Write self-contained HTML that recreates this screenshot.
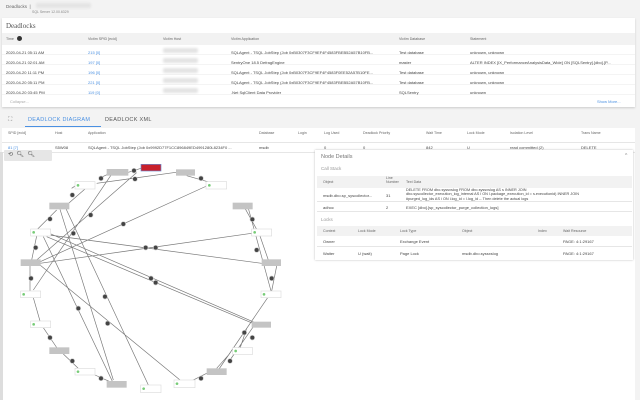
<!DOCTYPE html>
<html><head><meta charset="utf-8"><style>
*{margin:0;padding:0;box-sizing:border-box}
body{width:640px;height:400px;overflow:hidden;background:#f3f3f3;font-family:"Liberation Sans",sans-serif;color:#555;position:relative}
.a{position:absolute;white-space:nowrap}
.t{font-size:4px;color:#444}
.h{font-size:3.6px;color:#666}
.b{color:#4a90e2}
.blur{background:#e4e4e4;height:5px;border-radius:2px;filter:blur(1px)}
</style></head><body>
<div class="a" style="left:6px;top:4px;font-size:4.5px;color:#666">Deadlocks &nbsp;|</div>
<div class="a blur" style="left:36px;top:3px;width:55px;height:5px"></div>
<div class="a" style="left:32px;top:10px;font-size:3.5px;color:#888">SQL Server 12.00.6329</div>
<div class="a" style="left:2px;top:18px;width:633px;height:89px;background:#fff;box-shadow:0 1px 2px #ccc"></div>
<div class="a" style="left:6px;top:22px;font-size:7px;color:#555;font-family:'Liberation Serif',serif">Deadlocks</div>
<div class="a" style="left:2px;top:33px;width:633px;height:12px;background:#f2f2f2"></div>
<div class="a h" style="left:6px;top:37px">Time</div><div class="a" style="left:17px;top:36px;width:5px;height:5px;border-radius:50%;background:#333"></div>
<div class="a h" style="left:88px;top:37px">Victim SPID [ecid]</div>
<div class="a h" style="left:163px;top:37px">Victim Host</div>
<div class="a h" style="left:231px;top:37px">Victim Application</div>
<div class="a h" style="left:399px;top:37px">Victim Database</div>
<div class="a h" style="left:470px;top:37px">Statement</div>
<div class="a" style="left:2px;top:45px;width:633px;height:50px;background:linear-gradient(#fff 9.5px,#e8e8e8 9.5px,#e8e8e8 10px,#fff 10px) 0 0/100% 10px"></div>
<div class="a t" style="left:6px;top:48px;line-height:10px">2020-04-21 05:11 AM<br>2020-04-21 02:01 AM<br>2020-04-20 11:11 PM<br>2020-04-20 05:11 PM<br>2020-04-20 03:45 PM</div>
<div class="a t b" style="left:88px;top:48px;line-height:10px">215 [0]<br>197 [0]<br>196 [0]<br>221 [0]<br>119 [0]</div>
<div class="a blur" style="left:163px;top:48px;width:35px"></div><div class="a blur" style="left:163px;top:58px;width:35px"></div><div class="a blur" style="left:163px;top:68px;width:35px"></div><div class="a blur" style="left:163px;top:78px;width:35px"></div><div class="a blur" style="left:163px;top:88px;width:35px"></div>
<div class="a t" style="left:231px;top:48px;line-height:10px">SQLAgent - TSQL JobStep (Job 0xB0307F3CF9EF4F4583FBEB52A57B10FB...<br>SentryOne 18.5 DefragEngine<br>SQLAgent - TSQL JobStep (Job 0xB0307F3CF9EF4F4583F0EE52A57B10FE...<br>SQLAgent - TSQL JobStep (Job 0xB0307F3CF9EF4F4583FBEB52A57B10FB...<br>.Net SqlClient Data Provider</div>
<div class="a t" style="left:399px;top:48px;line-height:10px">Test database<br>master<br>Test database<br>Test database<br>SQLSentry</div>
<div class="a t" style="left:470px;top:48px;line-height:10px">unknown, unknown<br>ALTER INDEX [IX_PerformanceAnalysisData_Wide] ON [SQLSentry].[dbo].[P...<br>unknown, unknown<br>unknown, unknown<br>unknown</div>
<div class="a" style="left:10px;top:99px;font-size:4px;color:#aaa">Collapse...</div>
<div class="a b" style="left:597px;top:99px;font-size:4px">Show More...</div>
<div class="a" style="left:2px;top:110px;width:633px;height:290px;background:#fff"></div>
<div class="a" style="left:2px;top:110px;width:633px;height:18px;background:#f3f3f3"></div>
<div class="a" style="left:8px;top:117px;font-size:6px;color:#888">⛶</div>
<div class="a" style="left:28px;top:117px;font-size:5.5px;color:#4a90e2;letter-spacing:.3px">DEADLOCK DIAGRAM</div>
<div class="a" style="left:25px;top:126px;width:76px;height:1px;background:#4a90e2"></div>
<div class="a" style="left:105px;top:117px;font-size:5.5px;color:#555;letter-spacing:.3px">DEADLOCK XML</div>
<div class="a h" style="left:8px;top:131px">SPID [ecid]</div><div class="a h" style="left:55px;top:131px">Host</div><div class="a h" style="left:88px;top:131px">Application</div><div class="a h" style="left:259px;top:131px">Database</div><div class="a h" style="left:298px;top:131px">Login</div><div class="a h" style="left:324px;top:131px">Log Used</div><div class="a h" style="left:363px;top:131px">Deadlock Priority</div><div class="a h" style="left:426px;top:131px">Wait Time</div><div class="a h" style="left:467px;top:131px">Lock Mode</div><div class="a h" style="left:510px;top:131px">Isolation Level</div><div class="a h" style="left:581px;top:131px">Trans Name</div>
<div class="a" style="left:2px;top:142px;width:633px;height:1px;background:#e6e6e6"></div>
<div class="a t" style="left:8px;top:145px"><span class="b">81 [7]</span></div><div class="a t" style="left:55px;top:145px">S5W08</div><div class="a t" style="left:88px;top:145px">SQLAgent - TSQL JobStep (Job 0x9992D77F1CC896849ED4991280L8234F0 ...</div><div class="a t" style="left:259px;top:145px">msdb</div><div class="a t" style="left:324px;top:145px">0</div><div class="a t" style="left:363px;top:145px">0</div><div class="a t" style="left:426px;top:145px">842</div><div class="a t" style="left:467px;top:145px">U</div><div class="a t" style="left:510px;top:145px">read committed (2)</div><div class="a t" style="left:581px;top:145px">DELETE</div>
<div class="a" style="left:2px;top:152px;width:633px;height:1px;background:#e6e6e6"></div>
<div class="a" style="left:0px;top:152px;width:3px;height:248px;background:#ddd"></div>
<div class="a" style="left:4px;top:150px;width:48px;height:11px;background:#e6e6e6;border-radius:1px;font-size:6px;color:#555;padding:1px 4px">⟲ &nbsp;🔍︎ &nbsp;🔍︎</div>
<svg class="a" style="left:0;top:150px" width="300" height="250" viewBox="0 0 900 750">
<g stroke="#777" stroke-width="2" fill="none">
<path d="M340 65L100 420M410 68L110 330M528 67L290 100M620 108L110 340M180 178L340 690M148 250L770 520M148 255L785 340M120 340L755 250M120 345L540 690M195 170L445 705M140 260L770 525M130 260L340 700M745 175L815 430M735 175L770 238M805 440L655 660M760 530L690 630M385 67L423 55M297 85L330 70M255 117L200 165M170 180L110 240M110 258L95 330M90 348L90 423M100 443L120 513M130 533L175 600M190 612L240 660M285 675L330 695M215 115L240 98M560 77L640 100M830 348L815 423M780 258L805 330M740 535L720 595M690 610L650 655M560 700L620 670"/>
</g>
<g fill="#444" stroke="#ccc" stroke-width="2">
<circle cx="402" cy="62" r="7"/><circle cx="405" cy="87" r="7"/><circle cx="303" cy="85" r="7"/><circle cx="217" cy="135" r="7"/><circle cx="150" cy="207" r="7"/><circle cx="107" cy="293" r="7"/><circle cx="93" cy="385" r="7"/><circle cx="272" cy="195" r="7"/><circle cx="220" cy="250" r="7"/><circle cx="370" cy="222" r="7"/><circle cx="437" cy="293" r="7"/><circle cx="467" cy="293" r="7"/><circle cx="453" cy="385" r="7"/><circle cx="467" cy="398" r="7"/><circle cx="315" cy="440" r="7"/><circle cx="235" cy="475" r="7"/><circle cx="323" cy="520" r="7"/><circle cx="150" cy="563" r="7"/><circle cx="217" cy="633" r="7"/><circle cx="303" cy="685" r="7"/><circle cx="603" cy="85" r="7"/><circle cx="757" cy="208" r="7"/><circle cx="770" cy="300" r="7"/><circle cx="815" cy="385" r="7"/><circle cx="733" cy="548" r="7"/><circle cx="757" cy="563" r="7"/><circle cx="690" cy="633" r="7"/><circle cx="603" cy="685" r="7"/>
</g>
<g fill="#c4c4c4">
<rect x="320" y="57" width="65" height="20"/><rect x="528" y="58" width="57" height="19"/><rect x="148" y="158" width="60" height="20"/><rect x="698" y="158" width="60" height="20"/><rect x="62" y="328" width="60" height="20"/><rect x="785" y="328" width="58" height="20"/><rect x="755" y="515" width="58" height="18"/><rect x="148" y="592" width="60" height="20"/><rect x="620" y="655" width="60" height="20"/><rect x="320" y="693" width="60" height="20"/>
</g>
<rect x="423" y="43" width="60" height="20" fill="#c8202c" stroke="#6a8ad0" stroke-width="2"/>
<g fill="#fff" stroke="#ddd" stroke-width="2">
<rect x="225" y="95" width="60" height="22"/><rect x="618" y="95" width="62" height="22"/><rect x="92" y="237" width="60" height="21"/><rect x="755" y="237" width="60" height="21"/><rect x="62" y="423" width="60" height="20"/><rect x="783" y="423" width="60" height="20"/><rect x="92" y="513" width="60" height="20"/><rect x="698" y="593" width="60" height="20"/><rect x="225" y="655" width="60" height="20"/><rect x="422" y="705" width="61" height="23"/><rect x="522" y="690" width="63" height="23"/>
</g>
<g fill="#7c7" >
<circle cx="234" cy="106" r="4"/><circle cx="628" cy="106" r="4"/><circle cx="101" cy="247" r="4"/><circle cx="764" cy="247" r="4"/><circle cx="71" cy="433" r="4"/><circle cx="792" cy="433" r="4"/><circle cx="101" cy="523" r="4"/><circle cx="707" cy="603" r="4"/><circle cx="234" cy="665" r="4"/><circle cx="431" cy="716" r="4"/><circle cx="531" cy="701" r="4"/>
</g>
</svg>
<div class="a" style="left:315px;top:150px;width:318px;height:110px;background:#fff;box-shadow:0 0 2px #bbb"></div>
<div class="a" style="left:321px;top:154px;font-size:5.5px;color:#777">Node Details</div>
<div class="a" style="left:625px;top:153px;font-size:5px;color:#888">^</div>
<div class="a" style="left:321px;top:166px;font-size:4.5px;color:#999">Call Stack</div>
<div class="a" style="left:317px;top:176px;width:315px;height:12px;background:#f2f2f2"></div>
<div class="a h" style="left:323px;top:180px">Object</div><div class="a h" style="left:386px;top:177px;line-height:3.6px">Line<br>Number</div><div class="a h" style="left:406px;top:180px">Text Data</div>
<div class="a t" style="left:323px;top:193px">msdb.dbo.sp_syscollector...</div><div class="a t" style="left:386px;top:193px">31</div>
<div class="a t" style="left:406px;top:188px;line-height:4.3px;font-size:3.8px">DELETE FROM dbo.syssxslog FROM dbo.syssxslog AS s INNER JOIN<br>dbo.syscollector_execution_log_internal AS l ON l.package_execution_id = s.executionid) INNER JOIN<br>#purged_log_ids AS i ON i.log_id = l.log_id -- Then delete the actual logs</div>
<div class="a" style="left:317px;top:201px;width:315px;height:1px;background:#e6e6e6"></div>
<div class="a t" style="left:323px;top:205px">adhoc</div><div class="a t" style="left:386px;top:205px">2</div><div class="a t" style="left:406px;top:205px">EXEC [dbo].[sp_syscollector_purge_collection_logs]</div>
<div class="a" style="left:317px;top:211px;width:315px;height:1px;background:#e6e6e6"></div>
<div class="a" style="left:321px;top:217px;font-size:4.5px;color:#999">Locks</div>
<div class="a" style="left:317px;top:226px;width:315px;height:10px;background:#f2f2f2"></div>
<div class="a h" style="left:323px;top:229px">Context</div><div class="a h" style="left:358px;top:229px">Lock Mode</div><div class="a h" style="left:400px;top:229px">Lock Type</div><div class="a h" style="left:462px;top:229px">Object</div><div class="a h" style="left:538px;top:229px">Index</div><div class="a h" style="left:563px;top:229px">Wait Resource</div>
<div class="a t" style="left:323px;top:239px">Owner</div><div class="a t" style="left:400px;top:239px">Exchange Event</div><div class="a t" style="left:563px;top:239px">PAGE: 4:1:29167</div>
<div class="a" style="left:317px;top:246px;width:315px;height:1px;background:#e6e6e6"></div>
<div class="a t" style="left:323px;top:251px">Waiter</div><div class="a t" style="left:358px;top:251px">U (wait)</div><div class="a t" style="left:400px;top:251px">Page Lock</div><div class="a t" style="left:462px;top:251px">msdb.dbo.syssxslog</div><div class="a t" style="left:563px;top:251px">PAGE: 4:1:29167</div>
</body></html>
